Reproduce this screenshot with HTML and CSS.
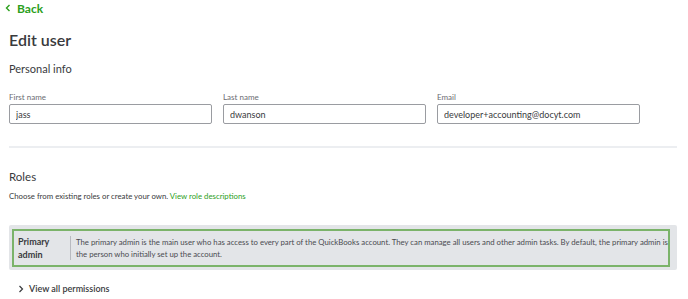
FILE: index.html
```html
<!DOCTYPE html>
<html lang="en">
<head>
    <meta charset="UTF-8">
    <meta name="viewport" content="width=device-width, initial-scale=1.0">
    <title>Edit user</title>
    <link rel="stylesheet" href="styles.css">
</head>
<body>

    <a class="back" href="#">
        <svg class="back-icon" width="6" height="8" viewBox="0 0 6 8"><path d="M4.5 1 L1.5 4 L4.5 7" fill="none" stroke="#2ca01c" stroke-width="1.4"/></svg>
        Back
    </a>

    <h1>Edit user</h1>

    <h2 class="section-title">Personal info</h2>

    <div class="fields">
        <div class="field">
            <label>First name</label>
            <input type="text" value="jass">
        </div>
        <div class="field">
            <label>Last name</label>
            <input type="text" value="dwanson">
        </div>
        <div class="field">
            <label>Email</label>
            <input type="text" value="developer+accounting@docyt.com">
        </div>
    </div>

    <hr class="divider">

    <h2 class="roles-title">Roles</h2>
    <p class="hint">Choose from existing roles or create your own. <a href="#">View role descriptions</a></p>

    <div class="role-box">
        <div class="role-selected">
            <div class="role-name">Primary<br>admin</div>
            <div class="role-desc">The primary admin is the main user who has access to every part of the QuickBooks account. They can manage all users and other admin tasks. By default, the primary admin is the person who initially set up the account.</div>
        </div>
    </div>

    <div class="permissions">
        <svg width="6" height="8" viewBox="0 0 6 8"><path d="M1.5 1 L4.5 4 L1.5 7" fill="none" stroke="#393a3d" stroke-width="1.2"/></svg>
        View all permissions
    </div>

</body>
</html>
```

FILE: styles.css
```css
body {
    font-family: Lato, "Open Sans", sans-serif;
    color: #393a3d;
    margin: 0;
    padding: 0 11px 0 9px;
    background-color: #fff;
}

.back {
    display: flex;
    align-items: center;
    gap: 6px;
    margin: 1px 0 0 -4px;
    height: 14px;
    font-size: 12px;
    font-weight: 700;
    color: #2ca01c;
    text-decoration: none;
}

h1 {
    font-size: 16px;
    font-weight: 600;
    margin: 15px 0 0;
    line-height: 20px;
}

h2 {
    font-size: 11px;
    font-weight: 400;
    margin: 9px 0 0;
    line-height: 16px;
}

.section-title {
    margin-top: 11px;
}

.fields {
    display: flex;
    gap: 11px;
    margin-top: 15px;
}

.field {
    display: flex;
    flex-direction: column;
    width: 203px;
}

.field label {
    font-size: 8px;
    color: #6b6c72;
    line-height: 10px;
    margin-bottom: 2px;
}

.field input {
    height: 20px;
    box-sizing: border-box;
    border: 1px solid #9a9ca1;
    border-radius: 2px;
    padding: 0 6px;
    font-family: inherit;
    font-size: 9px;
    color: #393a3d;
}

.divider {
    border: none;
    border-top: 2px solid #eceef1;
    margin: 22px 0 0;
}

.roles-title {
    margin-top: 21px;
    font-size: 11.5px;
}

.hint {
    font-size: 7.8px;
    margin: 5px 0 0;
    line-height: 12px;
}

.hint a {
    color: #2ca01c;
    text-decoration: none;
}

.role-box {
    background-color: #e3e5e8;
    border-radius: 2px;
    padding: 4px 7px 3px 3px;
    margin-top: 23px;
}

.role-selected {
    display: flex;
    align-items: center;
    border: 2px solid #7bb36a;
    padding: 4px 0 4px 4px;
}

.role-name {
    font-size: 9px;
    font-weight: 700;
    line-height: 13px;
    width: 52px;
    flex-shrink: 0;
}

.role-desc {
    font-size: 7.75px;
    line-height: 12px;
    border-left: 1px solid #b8bac0;
    padding-left: 5px;
    color: #4a4b50;
}

.permissions {
    display: flex;
    align-items: center;
    gap: 5px;
    margin: 13px 0 0 9px;
    font-size: 9px;
    font-weight: 600;
}
```
